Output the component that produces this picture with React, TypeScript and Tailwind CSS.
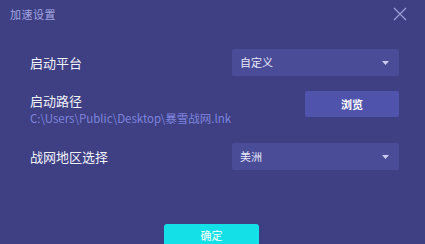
import React from "react";

const font = { fontFamily: '"Noto Sans CJK SC", "Noto Sans", sans-serif' };

function Caret() {
  return (
    <svg width="7" height="4" viewBox="0 0 7 4" className="shrink-0">
      <path d="M0 0h7L3.5 4z" fill="#c9cbef" />
    </svg>
  );
}

function SelectBox({ value }: { value: string }) {
  return (
    <div className="flex h-[27px] w-[167px] items-center justify-between rounded-[2px] bg-[#4a4c98] pl-[8px] pr-[10px]">
      <span className="text-[11px] leading-none text-[#e6e7fb]">{value}</span>
      <Caret />
    </div>
  );
}

export default function App() {
  return (
    <div
      style={font}
      className="flex h-[244px] w-[425px] flex-col overflow-hidden bg-[#3e4083]"
    >
      <div className="flex h-[28px] items-center justify-between pl-[10px] pr-[18px]">
        <span className="text-[11px] tracking-[0.5px] leading-none text-[#a3a6e2]">加速设置</span>
        <svg width="14" height="14" viewBox="0 0 14 14">
          <path d="M1 1l12 12M13 1L1 13" stroke="#9a9dd8" strokeWidth="1.3" />
        </svg>
      </div>

      <div className="flex flex-col pl-[30px] pr-[26px]">
        <div className="mt-[21px] flex items-center justify-between">
          <span className="text-[13px] leading-none text-[#f1f1fb]">启动平台</span>
          <SelectBox value="自定义" />
        </div>

        <div className="mt-[15px] flex items-start justify-between">
          <div className="flex flex-col pt-[3px]">
            <span className="text-[13px] leading-[14px] text-[#f1f1fb]">启动路径</span>
            <span className="mt-[4px] whitespace-nowrap text-[11.5px] leading-[12px] text-[#7f83dc]">
              C:\Users\Public\Desktop\暴雪战网.lnk
            </span>
          </div>
          <div className="flex h-[26px] w-[94px] items-center justify-center rounded-[2px] bg-[#5053ab] text-[11px] font-bold leading-none text-white">
            浏览
          </div>
        </div>

        <div className="mt-[19px] flex items-center justify-between">
          <span className="text-[13px] leading-none text-[#f1f1fb]">战网地区选择</span>
          <SelectBox value="美洲" />
        </div>
      </div>

      <div className="mt-auto flex justify-center pr-[2px]">
        <div className="flex h-[20px] w-[95px] items-start justify-center rounded-t-[3px] bg-[#13e1e7] pt-[6px] text-[11px] leading-none text-white">
          确定
        </div>
      </div>
    </div>
  );
}
